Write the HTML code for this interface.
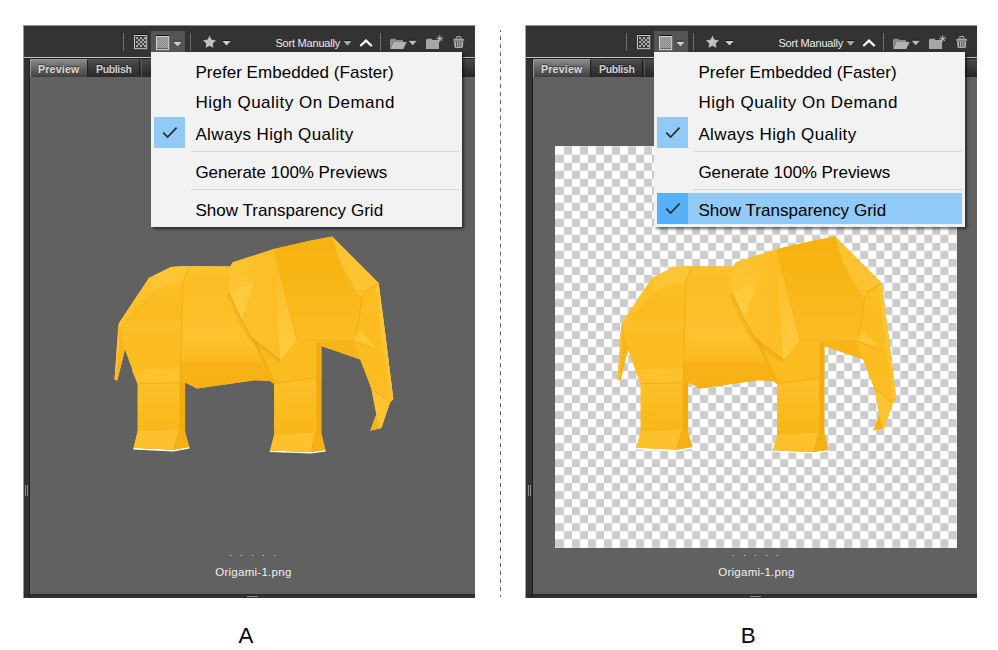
<!DOCTYPE html><html><head><meta charset="utf-8"><title>Preview quality options</title><style>
html,body{margin:0;padding:0;background:#fff;}
body{width:998px;height:650px;position:relative;overflow:hidden;font-family:"Liberation Sans",sans-serif;}
.abs{position:absolute;}
.grp{position:absolute;left:0;top:0;width:0;height:0;}
.frame{position:absolute;top:25px;width:451px;height:573px;background:#333;}
.topline{position:absolute;left:0;top:0;width:100%;height:1px;background:#8f8f8f;}
.tbline{position:absolute;left:0;top:32px;width:100%;height:1px;background:#c6c6c6;}
.tbline2{position:absolute;left:0;top:33px;width:100%;height:1px;background:#1c1c1c;}
.tabrow{position:absolute;right:0;top:34px;height:18px;background:linear-gradient(#4a4a4a,#3a3a3a 45%,#262626);}
.lstrip{position:absolute;top:33px;width:1px;bottom:0;background:#202020;}
.content{position:absolute;right:0;top:52px;height:517px;background:#616161;}
.botbar{position:absolute;left:0;right:0;bottom:0;height:4px;background:linear-gradient(#292929,#363636);}
.tab{position:absolute;top:59px;height:18px;box-sizing:border-box;font-weight:bold;font-size:10.5px;line-height:18px;text-align:center;color:#dcdcdc;text-shadow:0 -1px 1px rgba(0,0,0,.55);}
.tab.on{background:linear-gradient(#8a8a8a,#666 45%,#404040);border-left:1px solid #9a9a9a;border-right:1px solid #222;border-top:1px solid #999;}
.tab.off{background:linear-gradient(#4c4c4c,#3a3a3a 50%,#2a2a2a);border-right:1px solid #1e1e1e;border-top:1px solid #5a5a5a;color:#d2d2d2}
.sep{position:absolute;top:33px;width:1px;height:18px;background:#6e6e6e;}
.hot{position:absolute;left:151px;top:31px;width:34px;height:26px;background:#555;}
.sort{position:absolute;top:36px;letter-spacing:-.2px;font-size:11px;line-height:14px;color:#ececec;white-space:nowrap;}
.menu{position:absolute;left:151px;top:52px;width:311px;height:175px;background:#f2f2f2;box-shadow:2px 2px 2.5px rgba(0,0,0,.55);}
.mi{position:absolute;left:44.4px;font-size:17px;line-height:20px;color:#000;white-space:nowrap;transform-origin:0 50%;}
.m0{letter-spacing:.03px}.m1{letter-spacing:.48px}.m2{letter-spacing:.37px}.m3{letter-spacing:-.045px}.m4{letter-spacing:.03px}
.msep{position:absolute;left:40px;right:3.5px;height:1px;background:#d7d7d7;}
.chk{position:absolute;left:3px;width:31px;height:31px;background:#91c9f7;}
.hl{position:absolute;left:3px;right:3px;height:31px;background:#91c9f7;}
.chk.dk{background:#56b0fa;}
.label{position:absolute;top:565px;width:120px;text-align:center;letter-spacing:.27px;font-size:11.5px;line-height:14px;color:#f0f0f0;white-space:nowrap;}
.dot{position:absolute;top:555px;width:1px;height:1px;background:#d8d8d8;}
.cap{position:absolute;top:623px;font-size:22.3px;line-height:26px;color:#000;}
.checker{position:absolute;top:146px;width:402px;height:402px;background-color:#fff;
 background-image:conic-gradient(#ccc 25%,#fff 0 50%,#ccc 0 75%,#fff 0);background-size:16.08px 16.08px;background-position:8.04px 0;}
</style></head><body>
<div class="abs" style="left:23px;top:25px;width:1px;height:573px;background:#333;opacity:.5"></div>
<div class="frame" style="left:24px"><div class="topline"></div><div class="tbline"></div><div class="tbline2"></div><div class="tabrow" style="left:6px"></div><div class="content" style="left:6px"></div><div class="botbar"></div><div class="lstrip" style="left:5px"></div></div>
<div class="grp" style="left:0px">
<div class="abs" style="left:25px;top:485px;width:1px;height:11px;background:#8a8a8a"></div><div class="abs" style="left:27px;top:485px;width:1px;height:11px;background:#8a8a8a"></div>
<div class="abs" style="left:247px;top:596px;width:11px;height:1px;background:#8a8a8a"></div>
<div class="tab on" style="left:30px;width:57.5px;letter-spacing:.26px">Preview</div>
<div class="tab off" style="left:88.5px;width:51.5px;letter-spacing:-.36px">Publish</div>
<div class="abs" style="left:141px;top:59px;width:1px;height:18px;background:#555"></div>
<div class="sep" style="left:123px"></div><div class="hot"></div><div class="sep" style="left:190px"></div><div class="sep" style="left:380px"></div>
<div class="sort" style="left:275.4px">Sort Manually</div>
</div>
<svg class="abs" style="left:0px;top:0" width="475" height="600" viewBox="0 0 475 600">
<defs>
<linearGradient id="gMid0" gradientUnits="userSpaceOnUse" x1="0" y1="266" x2="0" y2="389"><stop offset="0" stop-color="#fcc230"/><stop offset="0.12" stop-color="#fbbd24"/><stop offset="0.55" stop-color="#fdc22e"/><stop offset="0.76" stop-color="#fbbb20"/><stop offset="0.8" stop-color="#f6b216"/><stop offset="1" stop-color="#f5b014"/></linearGradient>
<linearGradient id="gRump0" gradientUnits="userSpaceOnUse" x1="0" y1="266" x2="0" y2="384"><stop offset="0" stop-color="#fbbf28"/><stop offset="0.44" stop-color="#fabb1f"/><stop offset="0.5" stop-color="#fcc02b"/><stop offset="0.6" stop-color="#fbbc21"/><stop offset="1" stop-color="#fbbd22"/></linearGradient>
<linearGradient id="gLeg0" gradientUnits="userSpaceOnUse" x1="0" y1="383" x2="0" y2="432"><stop offset="0" stop-color="#fcc02a"/><stop offset="0.5" stop-color="#fbbc20"/><stop offset="1" stop-color="#f8b61a"/></linearGradient>
<linearGradient id="gFace0" gradientUnits="userSpaceOnUse" x1="0" y1="238" x2="0" y2="341"><stop offset="0" stop-color="#f6b20e"/><stop offset="0.45" stop-color="#f8b618"/><stop offset="1" stop-color="#fbbd24"/></linearGradient>
<linearGradient id="gEar0" gradientUnits="userSpaceOnUse" x1="229" y1="0" x2="296" y2="0"><stop offset="0" stop-color="#fdc332"/><stop offset="0.5" stop-color="#fcbf28"/><stop offset="1" stop-color="#fbbc20"/></linearGradient>
<linearGradient id="gStrip0" gradientUnits="userSpaceOnUse" x1="0" y1="250" x2="0" y2="360"><stop offset="0" stop-color="#fabb1e"/><stop offset="0.55" stop-color="#fdc535"/><stop offset="1" stop-color="#ffcb40"/></linearGradient>
<linearGradient id="gTrunk0" gradientUnits="userSpaceOnUse" x1="0" y1="283" x2="0" y2="430"><stop offset="0" stop-color="#fbbd22"/><stop offset="0.6" stop-color="#fbbc20"/><stop offset="1" stop-color="#fdc22e"/></linearGradient>
</defs>
<polyline points="133.4,448.6 173.3,450.6 189.5,447.6" fill="none" stroke="#fff" stroke-width="1.6"/>
<polyline points="269.8,451.2 310.8,452.8 325.6,450.6" fill="none" stroke="#fff" stroke-width="1.6"/>
<polygon points="118.8,323.5 149,278 171,267 189.7,266 230.4,266.4 229.7,267.7 232.9,262.3 273.9,249 310,240.7 332.1,236.4 378.6,283.1 384.8,330 393.3,399.3 389.9,402.7 381.4,428 370.4,430.6 376.4,414.5 371.3,388.3 360.3,359.6 321.3,346 321.3,433 325.4,450 310.8,452 270,450.4 274.2,435 274.2,384 270,381 255,380.2 197,388.5 185.1,382.5 185.1,432 189.3,447 173.3,449.8 133.6,447.8 137.7,431 137.7,384 125,349.2 117.3,380.8 114.6,379.5 118.2,326" fill="#fbbd22"/>
<polygon points="118.8,323.5 114.6,379.5 117.3,380.8 125,349.2 121,330" fill="#f7b51b"/>
<polygon points="118.8,323.5 114.6,379.5 116,380.2 119.5,340" fill="#fcc232"/>
<polygon points="118.8,323.5 149,278 171,267 189.7,266 183,281 181.3,340 179.8,383 137.7,384 125,349.2 120.5,332" fill="url(#gRump0)"/>
<polygon points="149,278 171,267 189.7,266 183,281 151,291" fill="#fdc534"/>
<polygon points="118.8,323.5 149,278 151,291 121,326" fill="#fcc12b"/>
<polygon points="189.7,266 230.4,266.4 229.7,267.7 228.6,292.5 241.5,320.5 251.2,337.7 274.2,384 270,381 255,380.2 197,388.5 185.1,382.5 179.8,383 181.3,340 183,281" fill="url(#gMid0)"/>
<polyline points="189.7,266 183,281 181.3,340 179.8,383" fill="none" stroke="#eaa512" stroke-width="0.8" opacity="0.8"/>
<polygon points="251.2,337.7 280.3,360.3 297,339.9 321.3,341 321.3,380 274.2,384" fill="#fbbc21"/>
<polygon points="251.2,337.7 257,342 276,384 274.2,384" fill="#f3ae14"/>
<polygon points="137.7,384 179.6,383 179.6,430 137.7,431.5" fill="url(#gLeg0)"/>
<polygon points="131.8,370 180.2,368 179.8,383 137.7,384" fill="#fcc12c"/>
<polygon points="179.6,383 185.1,382.5 185.1,432 179.6,430" fill="#f2ac10"/>
<polygon points="137.7,431.5 179.2,429.6 173.3,449.8 133.6,447.8" fill="#fcc12c"/>
<polygon points="179.2,429.6 185.1,432 189.3,447 173.3,449.8" fill="#f4b016"/>
<polygon points="179.2,429.6 175.4,444.8 173.3,449.8" fill="#e9a20c"/>
<polygon points="274.2,384 316.2,378 316.2,433 274.2,435" fill="url(#gLeg0)"/>
<polygon points="316.2,342 321.3,342.7 321.3,433 316.2,433" fill="#f2ac10"/>
<polygon points="274.2,435 315,433 310.8,452 270,450.4" fill="#fcc12c"/>
<polygon points="315,433 321.3,433 325.4,450 310.8,452" fill="#f4b016"/>
<polygon points="315,433 312.5,446 310.8,452" fill="#e9a20c"/>
<polyline points="274.2,383.5 316.2,377.8" fill="none" stroke="#f1ab12" stroke-width="0.9"/>
<polyline points="137.7,383.6 179.6,382.8" fill="none" stroke="#f1ab12" stroke-width="0.9"/>
<polygon points="321.3,341 353,340.7 360.3,359.6 321.3,346" fill="#f7b51b"/>
<polygon points="273.9,249 310,240.7 332.1,236.4 340,262 356.1,291.4 361.7,297 358.9,321 353,340.7 297,339.9" fill="url(#gFace0)"/>
<polygon points="332.1,236.4 378.6,283.1 365.4,291.4 356.1,291.4 340,262" fill="#fcc230"/>
<polygon points="378.6,283.1 384.8,330 393.3,399.3 389.9,402.7 371.3,388.3 360.3,359.6 353,340.7 358.9,321 361.7,297 365.4,291.4" fill="url(#gTrunk0)"/>
<polygon points="378.6,283.1 384.8,330 393.3,399.3 390.5,397 381.2,335 375.5,286" fill="#fdc535"/>
<polygon points="371.3,388.3 389.9,402.7 381.4,428 370.4,430.6 376.4,414.5" fill="#fdc432"/>
<polyline points="371.3,388.3 389.9,402.7" fill="none" stroke="#e9a511" stroke-width="0.8" opacity="0.8"/>
<polygon points="356.1,291.4 365.4,291.4 361.7,297" fill="#fdc636"/>
<polyline points="378.6,283.1 365.4,291.4 361.7,297 358.9,321 354.5,336" fill="none" stroke="#e9a511" stroke-width="0.9" opacity="0.85"/>
<polyline points="356.1,291.4 365.4,291.4" fill="none" stroke="#e9a511" stroke-width="0.7" opacity="0.8"/>
<polygon points="353,340.7 361,330 376.4,349.4" fill="#fdc636"/>
<polyline points="353,340.7 376.4,349.4" fill="none" stroke="#eaa512" stroke-width="0.7"/>
<polygon points="376.4,414.5 379.8,428.4 370.4,430.6" fill="#f6b41a"/>
<polyline points="227.6,293.5 240.2,321.5 250.2,339 279.3,361.8" fill="none" stroke="#dd9a08" stroke-width="4" opacity="0.22"/>
<polygon points="232.9,262.3 273.9,249 277,309.7 280.3,360.3 251.2,337.7 241.5,320.5 228.6,292.5 229.7,267.7" fill="url(#gEar0)"/>
<polygon points="228.6,292.5 254,282 241.5,320.5" fill="#ffca3e"/>
<polygon points="232.9,262.3 254,282 228.6,292.5 229.7,267.7" fill="#fdc331"/>
<polygon points="241.5,320.5 254,282 262,300 251.2,337.7" fill="#fcc02a"/>
<polygon points="273.9,249 297,339.9 280.3,360.3 277,309.7" fill="url(#gStrip0)"/>
<polyline points="228.6,292.5 241.5,320.5 251.2,337.7 280.3,360.3" fill="none" stroke="#e7a30f" stroke-width="1.3" opacity="0.75"/>
<polyline points="273.9,249 297,339.9" fill="none" stroke="#eeaa14" stroke-width="0.8" opacity="0.8"/>
<polyline points="297,339.9 353,340.7" fill="none" stroke="#eeaa14" stroke-width="0.8" opacity="0.7"/>
</svg>
<svg class="abs" style="left:0px;top:0" width="480" height="60" viewBox="0 0 480 60">
<rect x="134" y="34" width="13" height="1" fill="#141414"/>
<rect x="134.5" y="35.5" width="12.2" height="13.2" fill="#383838" stroke="#c6c6c6" stroke-width="1"/>
<rect x="136.1" y="37.1" width="2" height="2" fill="#b4b4b4"/>
<rect x="140.1" y="37.1" width="2" height="2" fill="#b4b4b4"/>
<rect x="144.1" y="37.1" width="2" height="2" fill="#b4b4b4"/>
<rect x="138.1" y="39.1" width="2" height="2" fill="#b4b4b4"/>
<rect x="142.1" y="39.1" width="2" height="2" fill="#b4b4b4"/>
<rect x="136.1" y="41.1" width="2" height="2" fill="#b4b4b4"/>
<rect x="140.1" y="41.1" width="2" height="2" fill="#b4b4b4"/>
<rect x="144.1" y="41.1" width="2" height="2" fill="#b4b4b4"/>
<rect x="138.1" y="43.1" width="2" height="2" fill="#b4b4b4"/>
<rect x="142.1" y="43.1" width="2" height="2" fill="#b4b4b4"/>
<rect x="136.1" y="45.1" width="2" height="2" fill="#b4b4b4"/>
<rect x="140.1" y="45.1" width="2" height="2" fill="#b4b4b4"/>
<rect x="144.1" y="45.1" width="2" height="2" fill="#b4b4b4"/>
<rect x="156" y="35" width="13" height="1" fill="#141414"/>
<defs><pattern id="dots0" patternUnits="userSpaceOnUse" x="157" y="37" width="2" height="2"><rect width="2" height="2" fill="#a6a6a6"/><rect width="1" height="1" fill="#8a8a8a"/><rect x="1" y="1" width="1" height="1" fill="#8a8a8a"/></pattern></defs>
<rect x="156.5" y="36.5" width="12.2" height="13.2" fill="url(#dots0)" stroke="#d2d2d2" stroke-width="1"/>
<rect x="157" y="48" width="11" height="1" fill="#5a5a5a" opacity="0.8"/>
<rect x="173.3" y="40.8" width="8.399999999999977" height="1" fill="#161616"/>
<polygon points="173.3,41.8 181.7,41.8 177.5,46.3" fill="#cfcfcf"/>
<polygon points="209.50,34.80 211.73,39.33 216.73,40.05 213.11,43.57 213.97,48.55 209.50,46.20 205.03,48.55 205.89,43.57 202.27,40.05 207.27,39.33" fill="#c2c2c2" stroke="#1e1e1e" stroke-width="0.7"/>
<rect x="222.3" y="40" width="8.399999999999977" height="1" fill="#161616"/>
<polygon points="222.3,41 230.7,41 226.5,45.6" fill="#cdcdcd"/>
<rect x="343.5" y="40" width="8.0" height="1" fill="#161616"/>
<polygon points="343.5,41 351.5,41 347.5,45.8" fill="#a8a8a8"/>
<polyline points="360.3,46 366,40.6 371.7,46" fill="none" stroke="#fff" stroke-width="2.2"/>
<path d="M390,49 L390,40 L391,38.7 L395.5,38.7 L396.5,40 L403,40 L403,42 L393,42 Z" fill="#8c8c8c"/>
<path d="M390.3,49 L393.3,42 L406.6,42 L403.3,49 Z" fill="#b2b2b2"/>
<rect x="408.7" y="39.8" width="8.0" height="1" fill="#161616"/>
<polygon points="408.7,40.8 416.7,40.8 412.7,45.3" fill="#bdbdbd"/>
<path d="M426,49 L426,40 L427,38.7 L431.5,38.7 L432.5,40 L439,40 L439,49 Z" fill="#a6a6a6"/>
<g stroke="#dcdcdc" stroke-width="0.7"><line x1="439.7" y1="35.2" x2="439.7" y2="42.2"/><line x1="436.2" y1="38.7" x2="443.2" y2="38.7"/><line x1="437.3" y1="36.3" x2="442.1" y2="41.1"/><line x1="442.1" y1="36.3" x2="437.3" y2="41.1"/></g>
<path d="M456.7,38.6 L456.7,37.4 Q456.7,36.5 457.7,36.5 L459.7,36.5 Q460.7,36.5 460.7,37.4 L460.7,38.6" fill="none" stroke="#a8a8a8" stroke-width="1.1"/>
<path d="M453,40.7 Q453,38.5 455.5,38.5 L461.9,38.5 Q464.4,38.5 464.4,40.7 Z" fill="#a4a4a4"/>
<path d="M454,41.2 L463.3,41.2 L462.9,46.8 Q462.8,48 461.6,48 L455.8,48 Q454.6,48 454.5,46.8 Z" fill="#b4b4b4"/>
<g stroke="#4a4a4a" stroke-width="0.95"><line x1="456.4" y1="41.6" x2="456.6" y2="47.2"/><line x1="458.7" y1="41.6" x2="458.7" y2="47.2"/><line x1="461" y1="41.6" x2="460.8" y2="47.2"/></g>
</svg>
<div class="grp" style="left:0px">
<div class="menu"><div class="chk" style="top:65px"></div><div class="mi m0" style="top:10.5px">Prefer Embedded (Faster)</div><div class="mi m1" style="top:41px">High Quality On Demand</div><div class="mi m2" style="top:72.5px">Always High Quality</div><div class="mi m3" style="top:110.5px">Generate 100% Previews</div><div class="mi m4" style="top:148.5px">Show Transparency Grid</div><div class="msep" style="top:99px"></div><div class="msep" style="top:137px"></div><svg class="abs" style="left:3px;top:65px" width="31" height="31" viewBox="0 0 31 31"><polyline points="9.2,15.6 13.6,20 22.6,10.6" fill="none" stroke="#2b2b2b" stroke-width="1.7"/></svg></div>
<div class="dot" style="left:230px"></div>
<div class="dot" style="left:241px"></div>
<div class="dot" style="left:252px"></div>
<div class="dot" style="left:263px"></div>
<div class="dot" style="left:274px"></div>
<div class="label" style="left:193.4px">Origami-1.png</div>
</div>
<div class="abs" style="left:525px;top:25px;width:1px;height:573px;background:#333;opacity:.45"></div>
<div class="frame" style="left:526px"><div class="topline"></div><div class="tbline"></div><div class="tbline2"></div><div class="tabrow" style="left:7px"></div><div class="content" style="left:7px"></div><div class="botbar"></div><div class="lstrip" style="left:6px"></div></div>
<div class="grp" style="left:503px">
<div class="abs" style="left:25px;top:485px;width:1px;height:11px;background:#8a8a8a"></div><div class="abs" style="left:27px;top:485px;width:1px;height:11px;background:#8a8a8a"></div>
<div class="abs" style="left:247px;top:596px;width:11px;height:1px;background:#8a8a8a"></div>
<div class="tab on" style="left:30px;width:57.5px;letter-spacing:.26px">Preview</div>
<div class="tab off" style="left:88.5px;width:51.5px;letter-spacing:-.36px">Publish</div>
<div class="abs" style="left:141px;top:59px;width:1px;height:18px;background:#555"></div>
<div class="sep" style="left:123px"></div><div class="hot"></div><div class="sep" style="left:190px"></div><div class="sep" style="left:380px"></div>
<div class="sort" style="left:275.4px">Sort Manually</div>
<svg class="abs" style="left:51.8px;top:145.8px" width="402.1" height="402" viewBox="0 0 402.1 402"><defs><pattern id="ck" patternUnits="userSpaceOnUse" x="0.99" y="0.79" width="16.016" height="16.016"><rect x="8.008" y="0" width="8.008" height="8.008" fill="#ccc"/><rect x="0" y="8.008" width="8.008" height="8.008" fill="#ccc"/></pattern></defs><rect width="402.1" height="402" fill="#fff"/><g fill="url(#ck)"><rect x="0.99" y="0.79" width="400.4" height="400.4"/><rect x="0.99" y="0.79" width="0.99" height="400.4" transform="translate(-0.99,0)"/><rect x="400.68" y="0.79" width="0.71" height="400.4" transform="translate(0.71,0)"/><rect x="0.99" y="0.79" width="400.4" height="0.79" transform="translate(0,-0.79)"/><rect x="0.99" y="400.38" width="400.4" height="0.81" transform="translate(0,0.81)"/></g></svg>
</div>
<svg class="abs" style="left:503px;top:0" width="475" height="600" viewBox="0 0 475 600">
<defs>
<linearGradient id="gMid503" gradientUnits="userSpaceOnUse" x1="0" y1="266" x2="0" y2="389"><stop offset="0" stop-color="#fcc230"/><stop offset="0.12" stop-color="#fbbd24"/><stop offset="0.55" stop-color="#fdc22e"/><stop offset="0.76" stop-color="#fbbb20"/><stop offset="0.8" stop-color="#f6b216"/><stop offset="1" stop-color="#f5b014"/></linearGradient>
<linearGradient id="gRump503" gradientUnits="userSpaceOnUse" x1="0" y1="266" x2="0" y2="384"><stop offset="0" stop-color="#fbbf28"/><stop offset="0.44" stop-color="#fabb1f"/><stop offset="0.5" stop-color="#fcc02b"/><stop offset="0.6" stop-color="#fbbc21"/><stop offset="1" stop-color="#fbbd22"/></linearGradient>
<linearGradient id="gLeg503" gradientUnits="userSpaceOnUse" x1="0" y1="383" x2="0" y2="432"><stop offset="0" stop-color="#fcc02a"/><stop offset="0.5" stop-color="#fbbc20"/><stop offset="1" stop-color="#f8b61a"/></linearGradient>
<linearGradient id="gFace503" gradientUnits="userSpaceOnUse" x1="0" y1="238" x2="0" y2="341"><stop offset="0" stop-color="#f6b20e"/><stop offset="0.45" stop-color="#f8b618"/><stop offset="1" stop-color="#fbbd24"/></linearGradient>
<linearGradient id="gEar503" gradientUnits="userSpaceOnUse" x1="229" y1="0" x2="296" y2="0"><stop offset="0" stop-color="#fdc332"/><stop offset="0.5" stop-color="#fcbf28"/><stop offset="1" stop-color="#fbbc20"/></linearGradient>
<linearGradient id="gStrip503" gradientUnits="userSpaceOnUse" x1="0" y1="250" x2="0" y2="360"><stop offset="0" stop-color="#fabb1e"/><stop offset="0.55" stop-color="#fdc535"/><stop offset="1" stop-color="#ffcb40"/></linearGradient>
<linearGradient id="gTrunk503" gradientUnits="userSpaceOnUse" x1="0" y1="283" x2="0" y2="430"><stop offset="0" stop-color="#fbbd22"/><stop offset="0.6" stop-color="#fbbc20"/><stop offset="1" stop-color="#fdc22e"/></linearGradient>
</defs>
<polyline points="133.4,448.6 173.3,450.6 189.5,447.6" fill="none" stroke="#fff" stroke-width="1.6"/>
<polyline points="269.8,451.2 310.8,452.8 325.6,450.6" fill="none" stroke="#fff" stroke-width="1.6"/>
<polygon points="118.8,323.5 149,278 171,267 189.7,266 230.4,266.4 229.7,267.7 232.9,262.3 273.9,249 310,240.7 332.1,236.4 378.6,283.1 384.8,330 393.3,399.3 389.9,402.7 381.4,428 370.4,430.6 376.4,414.5 371.3,388.3 360.3,359.6 321.3,346 321.3,433 325.4,450 310.8,452 270,450.4 274.2,435 274.2,384 270,381 255,380.2 197,388.5 185.1,382.5 185.1,432 189.3,447 173.3,449.8 133.6,447.8 137.7,431 137.7,384 125,349.2 117.3,380.8 114.6,379.5 118.2,326" fill="#fbbd22"/>
<polygon points="118.8,323.5 114.6,379.5 117.3,380.8 125,349.2 121,330" fill="#f7b51b"/>
<polygon points="118.8,323.5 114.6,379.5 116,380.2 119.5,340" fill="#fcc232"/>
<polygon points="118.8,323.5 149,278 171,267 189.7,266 183,281 181.3,340 179.8,383 137.7,384 125,349.2 120.5,332" fill="url(#gRump503)"/>
<polygon points="149,278 171,267 189.7,266 183,281 151,291" fill="#fdc534"/>
<polygon points="118.8,323.5 149,278 151,291 121,326" fill="#fcc12b"/>
<polygon points="189.7,266 230.4,266.4 229.7,267.7 228.6,292.5 241.5,320.5 251.2,337.7 274.2,384 270,381 255,380.2 197,388.5 185.1,382.5 179.8,383 181.3,340 183,281" fill="url(#gMid503)"/>
<polyline points="189.7,266 183,281 181.3,340 179.8,383" fill="none" stroke="#eaa512" stroke-width="0.8" opacity="0.8"/>
<polygon points="251.2,337.7 280.3,360.3 297,339.9 321.3,341 321.3,380 274.2,384" fill="#fbbc21"/>
<polygon points="251.2,337.7 257,342 276,384 274.2,384" fill="#f3ae14"/>
<polygon points="137.7,384 179.6,383 179.6,430 137.7,431.5" fill="url(#gLeg503)"/>
<polygon points="131.8,370 180.2,368 179.8,383 137.7,384" fill="#fcc12c"/>
<polygon points="179.6,383 185.1,382.5 185.1,432 179.6,430" fill="#f2ac10"/>
<polygon points="137.7,431.5 179.2,429.6 173.3,449.8 133.6,447.8" fill="#fcc12c"/>
<polygon points="179.2,429.6 185.1,432 189.3,447 173.3,449.8" fill="#f4b016"/>
<polygon points="179.2,429.6 175.4,444.8 173.3,449.8" fill="#e9a20c"/>
<polygon points="274.2,384 316.2,378 316.2,433 274.2,435" fill="url(#gLeg503)"/>
<polygon points="316.2,342 321.3,342.7 321.3,433 316.2,433" fill="#f2ac10"/>
<polygon points="274.2,435 315,433 310.8,452 270,450.4" fill="#fcc12c"/>
<polygon points="315,433 321.3,433 325.4,450 310.8,452" fill="#f4b016"/>
<polygon points="315,433 312.5,446 310.8,452" fill="#e9a20c"/>
<polyline points="274.2,383.5 316.2,377.8" fill="none" stroke="#f1ab12" stroke-width="0.9"/>
<polyline points="137.7,383.6 179.6,382.8" fill="none" stroke="#f1ab12" stroke-width="0.9"/>
<polygon points="321.3,341 353,340.7 360.3,359.6 321.3,346" fill="#f7b51b"/>
<polygon points="273.9,249 310,240.7 332.1,236.4 340,262 356.1,291.4 361.7,297 358.9,321 353,340.7 297,339.9" fill="url(#gFace503)"/>
<polygon points="332.1,236.4 378.6,283.1 365.4,291.4 356.1,291.4 340,262" fill="#fcc230"/>
<polygon points="378.6,283.1 384.8,330 393.3,399.3 389.9,402.7 371.3,388.3 360.3,359.6 353,340.7 358.9,321 361.7,297 365.4,291.4" fill="url(#gTrunk503)"/>
<polygon points="378.6,283.1 384.8,330 393.3,399.3 390.5,397 381.2,335 375.5,286" fill="#fdc535"/>
<polygon points="371.3,388.3 389.9,402.7 381.4,428 370.4,430.6 376.4,414.5" fill="#fdc432"/>
<polyline points="371.3,388.3 389.9,402.7" fill="none" stroke="#e9a511" stroke-width="0.8" opacity="0.8"/>
<polygon points="356.1,291.4 365.4,291.4 361.7,297" fill="#fdc636"/>
<polyline points="378.6,283.1 365.4,291.4 361.7,297 358.9,321 354.5,336" fill="none" stroke="#e9a511" stroke-width="0.9" opacity="0.85"/>
<polyline points="356.1,291.4 365.4,291.4" fill="none" stroke="#e9a511" stroke-width="0.7" opacity="0.8"/>
<polygon points="353,340.7 361,330 376.4,349.4" fill="#fdc636"/>
<polyline points="353,340.7 376.4,349.4" fill="none" stroke="#eaa512" stroke-width="0.7"/>
<polygon points="376.4,414.5 379.8,428.4 370.4,430.6" fill="#f6b41a"/>
<polyline points="227.6,293.5 240.2,321.5 250.2,339 279.3,361.8" fill="none" stroke="#dd9a08" stroke-width="4" opacity="0.22"/>
<polygon points="232.9,262.3 273.9,249 277,309.7 280.3,360.3 251.2,337.7 241.5,320.5 228.6,292.5 229.7,267.7" fill="url(#gEar503)"/>
<polygon points="228.6,292.5 254,282 241.5,320.5" fill="#ffca3e"/>
<polygon points="232.9,262.3 254,282 228.6,292.5 229.7,267.7" fill="#fdc331"/>
<polygon points="241.5,320.5 254,282 262,300 251.2,337.7" fill="#fcc02a"/>
<polygon points="273.9,249 297,339.9 280.3,360.3 277,309.7" fill="url(#gStrip503)"/>
<polyline points="228.6,292.5 241.5,320.5 251.2,337.7 280.3,360.3" fill="none" stroke="#e7a30f" stroke-width="1.3" opacity="0.75"/>
<polyline points="273.9,249 297,339.9" fill="none" stroke="#eeaa14" stroke-width="0.8" opacity="0.8"/>
<polyline points="297,339.9 353,340.7" fill="none" stroke="#eeaa14" stroke-width="0.8" opacity="0.7"/>
</svg>
<svg class="abs" style="left:503px;top:0" width="480" height="60" viewBox="0 0 480 60">
<rect x="134" y="34" width="13" height="1" fill="#141414"/>
<rect x="134.5" y="35.5" width="12.2" height="13.2" fill="#383838" stroke="#c6c6c6" stroke-width="1"/>
<rect x="136.1" y="37.1" width="2" height="2" fill="#b4b4b4"/>
<rect x="140.1" y="37.1" width="2" height="2" fill="#b4b4b4"/>
<rect x="144.1" y="37.1" width="2" height="2" fill="#b4b4b4"/>
<rect x="138.1" y="39.1" width="2" height="2" fill="#b4b4b4"/>
<rect x="142.1" y="39.1" width="2" height="2" fill="#b4b4b4"/>
<rect x="136.1" y="41.1" width="2" height="2" fill="#b4b4b4"/>
<rect x="140.1" y="41.1" width="2" height="2" fill="#b4b4b4"/>
<rect x="144.1" y="41.1" width="2" height="2" fill="#b4b4b4"/>
<rect x="138.1" y="43.1" width="2" height="2" fill="#b4b4b4"/>
<rect x="142.1" y="43.1" width="2" height="2" fill="#b4b4b4"/>
<rect x="136.1" y="45.1" width="2" height="2" fill="#b4b4b4"/>
<rect x="140.1" y="45.1" width="2" height="2" fill="#b4b4b4"/>
<rect x="144.1" y="45.1" width="2" height="2" fill="#b4b4b4"/>
<rect x="156" y="35" width="13" height="1" fill="#141414"/>
<defs><pattern id="dots503" patternUnits="userSpaceOnUse" x="157" y="37" width="2" height="2"><rect width="2" height="2" fill="#a6a6a6"/><rect width="1" height="1" fill="#8a8a8a"/><rect x="1" y="1" width="1" height="1" fill="#8a8a8a"/></pattern></defs>
<rect x="156.5" y="36.5" width="12.2" height="13.2" fill="url(#dots503)" stroke="#d2d2d2" stroke-width="1"/>
<rect x="157" y="48" width="11" height="1" fill="#5a5a5a" opacity="0.8"/>
<rect x="173.3" y="40.8" width="8.399999999999977" height="1" fill="#161616"/>
<polygon points="173.3,41.8 181.7,41.8 177.5,46.3" fill="#cfcfcf"/>
<polygon points="209.50,34.80 211.73,39.33 216.73,40.05 213.11,43.57 213.97,48.55 209.50,46.20 205.03,48.55 205.89,43.57 202.27,40.05 207.27,39.33" fill="#c2c2c2" stroke="#1e1e1e" stroke-width="0.7"/>
<rect x="222.3" y="40" width="8.399999999999977" height="1" fill="#161616"/>
<polygon points="222.3,41 230.7,41 226.5,45.6" fill="#cdcdcd"/>
<rect x="343.5" y="40" width="8.0" height="1" fill="#161616"/>
<polygon points="343.5,41 351.5,41 347.5,45.8" fill="#a8a8a8"/>
<polyline points="360.3,46 366,40.6 371.7,46" fill="none" stroke="#fff" stroke-width="2.2"/>
<path d="M390,49 L390,40 L391,38.7 L395.5,38.7 L396.5,40 L403,40 L403,42 L393,42 Z" fill="#8c8c8c"/>
<path d="M390.3,49 L393.3,42 L406.6,42 L403.3,49 Z" fill="#b2b2b2"/>
<rect x="408.7" y="39.8" width="8.0" height="1" fill="#161616"/>
<polygon points="408.7,40.8 416.7,40.8 412.7,45.3" fill="#bdbdbd"/>
<path d="M426,49 L426,40 L427,38.7 L431.5,38.7 L432.5,40 L439,40 L439,49 Z" fill="#a6a6a6"/>
<g stroke="#dcdcdc" stroke-width="0.7"><line x1="439.7" y1="35.2" x2="439.7" y2="42.2"/><line x1="436.2" y1="38.7" x2="443.2" y2="38.7"/><line x1="437.3" y1="36.3" x2="442.1" y2="41.1"/><line x1="442.1" y1="36.3" x2="437.3" y2="41.1"/></g>
<path d="M456.7,38.6 L456.7,37.4 Q456.7,36.5 457.7,36.5 L459.7,36.5 Q460.7,36.5 460.7,37.4 L460.7,38.6" fill="none" stroke="#a8a8a8" stroke-width="1.1"/>
<path d="M453,40.7 Q453,38.5 455.5,38.5 L461.9,38.5 Q464.4,38.5 464.4,40.7 Z" fill="#a4a4a4"/>
<path d="M454,41.2 L463.3,41.2 L462.9,46.8 Q462.8,48 461.6,48 L455.8,48 Q454.6,48 454.5,46.8 Z" fill="#b4b4b4"/>
<g stroke="#4a4a4a" stroke-width="0.95"><line x1="456.4" y1="41.6" x2="456.6" y2="47.2"/><line x1="458.7" y1="41.6" x2="458.7" y2="47.2"/><line x1="461" y1="41.6" x2="460.8" y2="47.2"/></g>
</svg>
<div class="grp" style="left:503px">
<div class="menu"><div class="hl" style="top:141px"></div><div class="chk dk" style="top:141px"></div><div class="chk" style="top:65px"></div><div class="mi m0" style="top:10.5px">Prefer Embedded (Faster)</div><div class="mi m1" style="top:41px">High Quality On Demand</div><div class="mi m2" style="top:72.5px">Always High Quality</div><div class="mi m3" style="top:110.5px">Generate 100% Previews</div><div class="mi m4" style="top:148.5px">Show Transparency Grid</div><div class="msep" style="top:99px"></div><div class="msep" style="top:137px"></div><svg class="abs" style="left:3px;top:65px" width="31" height="31" viewBox="0 0 31 31"><polyline points="9.2,15.6 13.6,20 22.6,10.6" fill="none" stroke="#2b2b2b" stroke-width="1.7"/></svg><svg class="abs" style="left:3px;top:141px" width="31" height="31" viewBox="0 0 31 31"><polyline points="9.2,15.6 13.6,20 22.6,10.6" fill="none" stroke="#2b2b2b" stroke-width="1.7"/></svg></div>
<div class="dot" style="left:230px"></div>
<div class="dot" style="left:241px"></div>
<div class="dot" style="left:252px"></div>
<div class="dot" style="left:263px"></div>
<div class="dot" style="left:274px"></div>
<div class="label" style="left:193.4px">Origami-1.png</div>
</div>
<div class="abs" style="left:500px;top:30px;width:1px;height:567px;background-image:linear-gradient(#606060 0 4px,transparent 4px 7.985px);background-position:0 -2px;background-size:1px 7.985px;background-repeat:repeat-y"></div>
<div class="cap" style="left:238.5px">A</div><div class="cap" style="left:740.8px">B</div>
</body></html>
